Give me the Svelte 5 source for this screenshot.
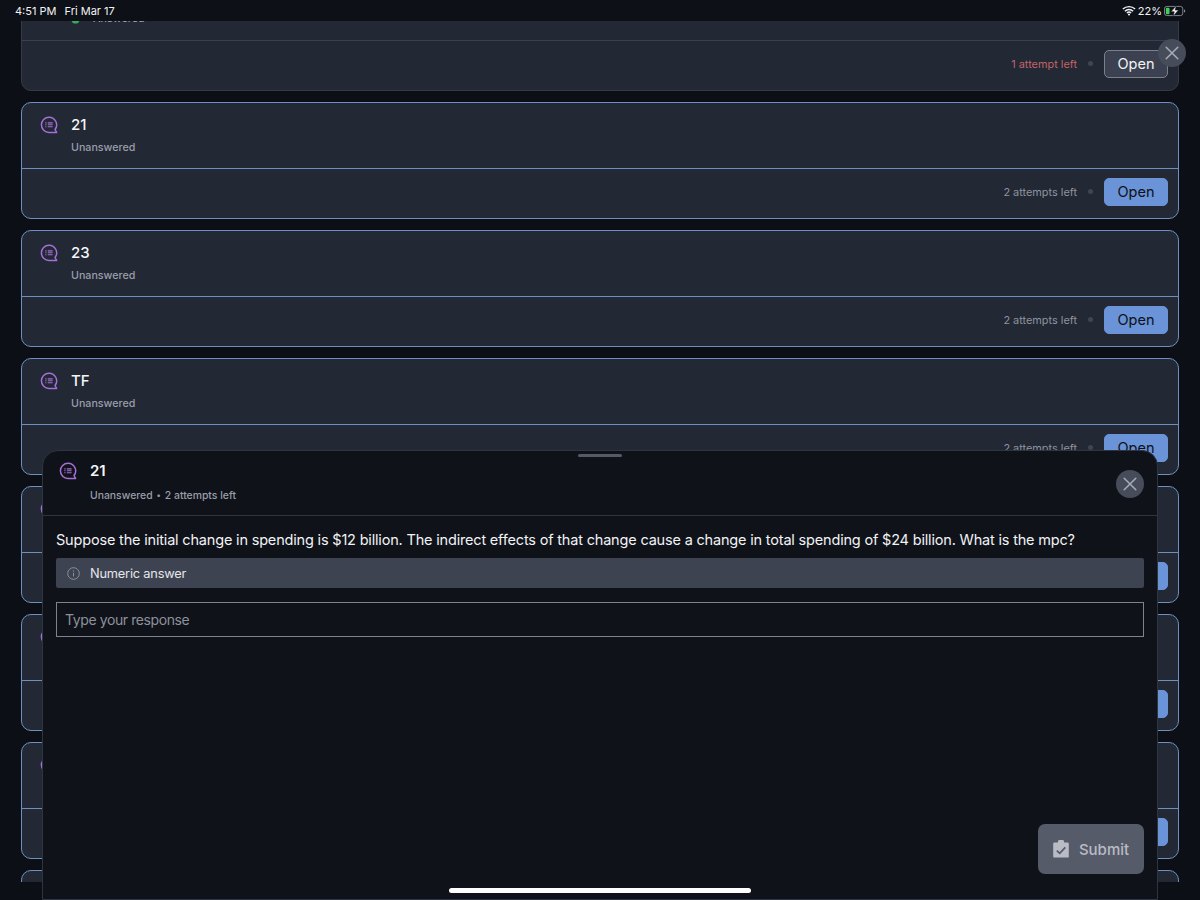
<script>
  // cards 4-7 sit behind the sheet, only their edges show
  const cards = [
    { title: '21', status: 'Unanswered', attempts: '2 attempts left' },
    { title: '23', status: 'Unanswered', attempts: '2 attempts left' },
    { title: 'TF', status: 'Unanswered', attempts: '2 attempts left' },
    { title: '' },
    { title: '' },
    { title: '' },
    { title: '' }
  ];
</script>

{#snippet pollIcon()}
  <svg class="poll-icon" viewBox="0 0 18 18" width="18" height="18" fill="none">
    <path d="M9 1.2a7.6 7.6 0 1 0 0 15.2h7.6l-1.6-2.9A7.6 7.6 0 0 0 9 1.2Z" stroke="#a56fd8" stroke-width="1.5" stroke-linejoin="round" />
    <path d="M7.8 6.9h4.8M7.8 8.8h4.8M7.8 10.7h4.8" stroke="#a56fd8" stroke-width="1.1" />
    <path d="M5.3 6.9h1.2M5.3 8.8h1.2M5.3 10.7h1.2" stroke="#a56fd8" stroke-width="1.1" />
  </svg>
{/snippet}

{#snippet closeIcon()}
  <svg viewBox="0 0 14 14" width="14" height="14" fill="none">
    <path d="M1.2 1.2l11.6 11.6M12.8 1.2L1.2 12.8" stroke="#a9acb6" stroke-width="1.5" stroke-linecap="round" />
  </svg>
{/snippet}

<div class="screen">
  <header class="status">
    <div class="status-left"><span>4:51 PM</span><span>Fri Mar 17</span></div>
    <div class="status-right">
      <svg viewBox="0 0 16 12" width="14" height="11" fill="none">
        <path d="M1 4.4a10 10 0 0 1 14 0M3.3 6.8a6.6 6.6 0 0 1 9.4 0M5.6 9a3.4 3.4 0 0 1 4.8 0" stroke="#f2f3f5" stroke-width="1.6" />
        <circle cx="8" cy="10.6" r="1.2" fill="#f2f3f5" />
      </svg>
      <span>22%</span>
      <svg viewBox="0 0 24 12" width="22" height="12" fill="none">
        <rect x="0.5" y="1" width="20" height="10" rx="2.6" stroke="#8a8d94" />
        <rect x="2" y="2.5" width="4" height="7" rx="1" fill="#3fd15a" />
        <path d="M21.8 4.4c1 .2 1.4.8 1.4 1.6s-.4 1.4-1.4 1.6Z" fill="#8a8d94" />
        <path d="M13.6 0 7.6 6.8h3.6L9.8 12l6-7h-3.6Z" fill="#f6f6f6" stroke="#0d1016" stroke-width="0.6" />
      </svg>
    </div>
  </header>

  <div class="list">
    <article class="card muted first">
      <div class="card-head">
        <div class="answered">
          <svg class="check" viewBox="0 0 10 10" width="9" height="9"><circle cx="5" cy="5" r="4.5" fill="#37a860" /></svg>
          <span>Answered</span>
        </div>
      </div>
      <div class="card-foot">
        <span class="attempts danger">1 attempt left</span>
        <span class="dot"></span>
        <button class="open outline">Open</button>
      </div>
    </article>

    {#each cards as card}
      <article class="card">
        <div class="card-head">
          {@render pollIcon()}
          {#if card.title}
            <div>
              <h3>{card.title}</h3>
              <p>{card.status}</p>
            </div>
          {/if}
        </div>
        <div class="card-foot">
          {#if card.title}
            <span class="attempts">{card.attempts}</span>
            <span class="dot"></span>
            <button class="open">Open</button>
          {:else}
            <button class="open" aria-label="Open"></button>
          {/if}
        </div>
      </article>
    {/each}
  </div>

  <button class="round outer-close" aria-label="Close">{@render closeIcon()}</button>

  <section class="sheet">
    <div class="grabber"></div>
    <div class="sheet-head">
      {@render pollIcon()}
      <div>
        <h3>21</h3>
        <p>Unanswered<span class="sep">•</span>2 attempts left</p>
      </div>
      <button class="round sheet-close" aria-label="Close">{@render closeIcon()}</button>
    </div>
    <div class="sheet-body">
      <p class="question">Suppose the initial change in spending is $12 billion. The indirect effects of that change cause a change in total spending of $24 billion. What is the mpc?</p>
      <div class="notice">
        <svg viewBox="0 0 13 13" width="13" height="13" fill="none">
          <circle cx="6.5" cy="6.5" r="5.8" stroke="#8d919c" />
          <path d="M6.5 5.8v3.6" stroke="#8d919c" />
          <circle cx="6.5" cy="3.9" r="0.7" fill="#8d919c" />
        </svg>
        <span>Numeric answer</span>
      </div>
      <div class="response">Type your response</div>
      <div class="actions">
        <button class="submit">
          <svg viewBox="0 0 16 18" width="16" height="18">
            <path d="M1.4 2.6h3.4a3.2 3.2 0 0 1 6.4 0h3.4a1.2 1.2 0 0 1 1.2 1.2v12.6a1.2 1.2 0 0 1-1.2 1.2H1.4a1.2 1.2 0 0 1-1.2-1.2V3.8a1.2 1.2 0 0 1 1.2-1.2Z" fill="#b9bcc5" />
            <path d="M3.8 10.6l2.9 2.8 5.6-6" fill="none" stroke="#565b69" stroke-width="1.7" />
          </svg>
          <span>Submit</span>
        </button>
      </div>
    </div>
  </section>

  <div class="home"></div>
</div>

<style>
  :global(body) {
    margin: 0;
    background: #0c0f15;
  }

  .screen {
    position: relative;
    width: 1200px;
    height: 900px;
    overflow: hidden;
    background: #0c0f15;
    font-family: Inter, "Noto Sans", sans-serif;
    color: #f2f3f5;
  }

  .status {
    height: 21px;
    padding: 0 14px 0 15px;
    display: flex;
    align-items: center;
    justify-content: space-between;
    font-size: 11px;
    background: #0d1016;
    box-sizing: border-box;
    position: relative;
    z-index: 1;
  }

  .status-left {
    display: flex;
    gap: 8px;
  }

  .status-right {
    display: flex;
    align-items: center;
    gap: 2px;
  }

  .list {
    height: 861px;
    overflow: hidden;
    padding: 0 21px;
    display: flex;
    flex-direction: column;
    gap: 11px;
  }

  .card {
    flex: none;
    height: 117px;
    box-sizing: border-box;
    border: 1px solid #6e8fc2;
    border-radius: 10px;
    background: #222834;
    display: flex;
    flex-direction: column;
  }

  .card.muted {
    border-color: #343a47;
  }

  .card.first {
    margin-top: -47px;
  }

  .card-head {
    height: 66px;
    flex: none;
    box-sizing: border-box;
    padding: 13px 18px 0;
    display: flex;
    gap: 13px;
    border-bottom: 1px solid #6e8fc2;
  }

  .muted .card-head {
    border-bottom-color: #3a404e;
  }

  .card h3,
  .sheet h3 {
    margin: 0;
    font-size: 15px;
    font-weight: 500;
    line-height: 18px;
    color: #f4f5f7;
  }

  .sheet h3 {
    font-weight: 600;
  }

  .card p,
  .sheet-head p {
    margin: 7px 0 0;
    font-size: 10.7px;
    line-height: 14px;
    font-weight: 500;
    color: #9a9eaa;
  }

  .poll-icon {
    flex: none;
  }

  .answered {
    display: flex;
    align-items: center;
    gap: 13px;
    padding-left: 31px;
    margin-top: 23px;
    height: 14px;
    font-size: 10.7px;
    font-weight: 500;
    color: #9a9eaa;
  }

  .check {
    margin-top: 3px;
  }

  .card-foot {
    flex: 1;
    display: flex;
    align-items: center;
    justify-content: flex-end;
    padding: 0 10px 4px 0;
  }

  .attempts {
    font-size: 10.9px;
    color: #8f939f;
  }

  .attempts.danger {
    color: #c0646a;
  }

  .dot {
    width: 5px;
    height: 5px;
    border-radius: 50%;
    background: #3f4552;
    margin: 0 11px;
  }

  .open {
    width: 64px;
    height: 28px;
    box-sizing: border-box;
    border: 1px solid #6a93d8;
    border-radius: 5px;
    background: #6a93d8;
    color: #0d1016;
    font: 400 14.5px Inter, "Noto Sans", sans-serif;
    padding: 0;
  }

  .open.outline {
    background: #3b4150;
    border-color: #7b808c;
    color: #f2f3f5;
  }

  .round {
    position: absolute;
    width: 28px;
    height: 28px;
    padding: 0;
    border: none;
    border-radius: 50%;
    background: #474c5a;
    display: flex;
    align-items: center;
    justify-content: center;
  }

  .outer-close {
    left: 1158px;
    top: 39px;
  }

  .sheet {
    position: absolute;
    left: 42px;
    top: 450px;
    width: 1116px;
    height: 450px;
    box-sizing: border-box;
    border: 1px solid #2e3440;
    border-radius: 16px 16px 0 0;
    background: #0f1219;
    display: flex;
    flex-direction: column;
  }

  .grabber {
    position: absolute;
    left: 535px;
    top: 3px;
    width: 44px;
    height: 3px;
    border-radius: 2px;
    background: #555a66;
  }

  .sheet-head {
    height: 65px;
    flex: none;
    box-sizing: border-box;
    padding: 11px 14px 0 16px;
    display: flex;
    gap: 13px;
    border-bottom: 1px solid #2e3440;
  }

  .sheet-head p {
    margin-top: 8px;
    font-size: 10.4px;
  }

  .sep {
    font-size: 8px;
    margin: 0 4px;
    vertical-align: 1px;
  }

  .sheet-close {
    right: 13px;
    top: 19px;
  }

  .sheet-body {
    flex: 1;
    padding: 15px 13px 25px;
    display: flex;
    flex-direction: column;
  }

  .question {
    margin: 0;
    font-size: 14.5px;
    letter-spacing: -0.18px;
    line-height: 18px;
    color: #f2f3f5;
    white-space: nowrap;
  }

  .notice {
    margin-top: 9px;
    height: 30px;
    flex: none;
    box-sizing: border-box;
    padding: 1px 0 0 11px;
    border-radius: 2px;
    background: #3d4351;
    display: flex;
    align-items: center;
    gap: 10px;
    font-size: 12.8px;
    letter-spacing: -0.2px;
    color: #e6e7ea;
  }

  .response {
    margin-top: 14px;
    height: 35px;
    flex: none;
    box-sizing: border-box;
    border: 1px solid #7f838d;
    display: flex;
    align-items: center;
    padding-left: 8px;
    font-size: 14px;
    letter-spacing: -0.4px;
    color: #8d919c;
  }

  .actions {
    margin-top: auto;
    display: flex;
    justify-content: flex-end;
  }

  .submit {
    width: 106px;
    height: 50px;
    border: none;
    border-radius: 7px;
    background: #565b69;
    display: flex;
    align-items: center;
    justify-content: center;
    gap: 10px;
    padding: 0;
    font: 500 15px Inter, "Noto Sans", sans-serif;
    color: #b9bcc5;
  }

  .home {
    position: absolute;
    left: 449px;
    top: 888px;
    width: 302px;
    height: 5px;
    border-radius: 3px;
    background: #fff;
  }
</style>
